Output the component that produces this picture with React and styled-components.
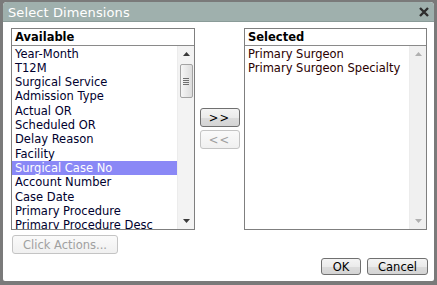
import React from "react";
import styled, { createGlobalStyle } from "styled-components";

const Global = createGlobalStyle`
  html, body { margin: 0; padding: 0; background: #7a7a7a; }
  body { width: 437px; height: 285px; overflow: hidden; font-family: "DejaVu Sans", Verdana, sans-serif; }
`;

const Dialog = styled.div`
  margin: 2px 0 0 3px;
  width: 431px;
  height: 279px;
  background: #fff;
  border-radius: 4px 4px 2px 2px;
  overflow: hidden;
  display: flex;
  flex-direction: column;
`;

const TitleBar = styled.div`
  height: 20px;
  flex: none;
  background: #9fb0ad;
  border-bottom: 1px solid #8a9b98;
  display: flex;
  align-items: center;
  justify-content: space-between;
  padding: 0 5px 0 5px;
  box-sizing: border-box;
`;

const Title = styled.span`
  color: #fff;
  font-size: 13px;
  letter-spacing: 0.1px;
  padding-top: 1px;
`;

const Body = styled.div`
  flex: 1;
  display: flex;
  flex-direction: column;
  padding: 6px 7px 6px 8px;
`;

const Row = styled.div`
  display: flex;
  align-items: flex-start;
`;

const ListBox = styled.div`
  width: ${(p) => p.$w}px;
  height: 202px;
  box-sizing: border-box;
  border: 1px solid #7f7f7f;
  display: flex;
  flex-direction: column;
  background: #fff;
`;

const Header = styled.div`
  height: 16px;
  flex: none;
  border-bottom: 1px solid #8a8a8a;
  font-weight: bold;
  font-size: 11.5px;
  line-height: 17px;
  padding-left: 3px;
  color: #000;
`;

const ListArea = styled.div`
  flex: 1;
  display: flex;
  overflow: hidden;
`;

const Items = styled.div`
  flex: 1;
  overflow: hidden;
  padding-top: 0.5px;
`;

const Item = styled.div`
  height: 14.33px;
  line-height: 15.5px;
  font-size: 11.5px;
  padding-left: 3px;
  white-space: nowrap;
  color: ${(p) => (p.$sel ? "#fff" : p.$tone)};
  background: ${(p) => (p.$sel ? "#8a88f6" : "transparent")};
`;

const ScrollTrack = styled.div`
  width: 16px;
  flex: none;
  background: ${(p) => (p.$empty ? "#f0f0f0" : "#f3f3f3")};
  border-left: 1px solid #ececec;
  display: flex;
  flex-direction: column;
  align-items: center;
`;

const Arrow = styled.div`
  height: 16px;
  width: 16px;
  display: flex;
  align-items: center;
  justify-content: center;
`;

const Spacer = styled.div`
  flex: 1;
`;

const Thumb = styled.div`
  width: 13px;
  height: 34px;
  margin-top: 2px;
  box-sizing: border-box;
  border: 1px solid #a3a3a3;
  border-radius: 2px;
  background: linear-gradient(to right, #f6f6f6, #dcdcdc);
  display: flex;
  flex-direction: column;
  align-items: center;
  justify-content: center;
  gap: 1px;
`;

const Grip = styled.div`
  width: 6px;
  height: 1px;
  background: #6f6f6f;
`;

const Middle = styled.div`
  flex: 1;
  display: flex;
  flex-direction: column;
  align-items: center;
  padding-top: 80px;
  gap: 3px;
`;

const Btn = styled.button`
  font-family: "DejaVu Sans", Verdana, sans-serif;
  font-size: 11.5px;
  width: ${(p) => p.$w}px;
  height: ${(p) => p.$h}px;
  padding: 0;
  box-sizing: border-box;
  border-radius: 3px;
  border: 1px solid ${(p) => (p.disabled ? "#c4c4c4" : "#707070")};
  background: ${(p) =>
    p.disabled
      ? "linear-gradient(#fafafa, #f0f0f0)"
      : "linear-gradient(#f4f4f4 0%, #ebebeb 50%, #dcdcdc 51%, #d4d4d4 100%)"};
  color: ${(p) => (p.disabled ? "#a0a0a0" : "#000")};
  display: flex;
  align-items: center;
  justify-content: center;
  letter-spacing: ${(p) => p.$ls || 0}px;
`;

const Footer = styled.div`
  display: flex;
  justify-content: flex-end;
  gap: 6px;
  margin-top: 4px;
  margin-right: -1px;
`;

const ActionRow = styled.div`
  margin-top: 5px;
  padding-left: 1px;
`;

const available = [
  "Year-Month",
  "T12M",
  "Surgical Service",
  "Admission Type",
  "Actual OR",
  "Scheduled OR",
  "Delay Reason",
  "Facility",
  "Surgical Case No",
  "Account Number",
  "Case Date",
  "Primary Procedure",
  "Primary Procedure Desc",
];

const selected = ["Primary Surgeon", "Primary Surgeon Specialty"];

const Up = ({ c }) => (
  <svg width="7" height="4" viewBox="0 0 7 4">
    <path d="M0 4 L3.5 0 L7 4 Z" fill={c} />
  </svg>
);
const Down = ({ c }) => (
  <svg width="7" height="4" viewBox="0 0 7 4">
    <path d="M0 0 L3.5 4 L7 0 Z" fill={c} />
  </svg>
);

export default function App() {
  return (
    <>
      <Global />
      <Dialog>
        <TitleBar>
          <Title>Select Dimensions</Title>
          <svg width="10" height="10" viewBox="0 0 10 10">
            <path d="M1 1 L9 9 M9 1 L1 9" stroke="#2e2e2e" strokeWidth="2.4" />
          </svg>
        </TitleBar>
        <Body>
          <Row>
            <ListBox $w={184}>
              <Header>Available</Header>
              <ListArea>
                <Items>
                  {available.map((t) => (
                    <Item key={t} $tone="#00002e" $sel={t === "Surgical Case No"}>
                      {t}
                    </Item>
                  ))}
                </Items>
                <ScrollTrack>
                  <Arrow>
                    <Up c="#3a3a3a" />
                  </Arrow>
                  <Thumb>
                    <Grip />
                    <Grip />
                    <Grip />
                    <Grip />
                  </Thumb>
                  <Spacer />
                  <Arrow>
                    <Down c="#3a3a3a" />
                  </Arrow>
                </ScrollTrack>
              </ListArea>
            </ListBox>
            <Middle>
              <Btn $w={40} $h={19} $ls={1}>&gt;&gt;</Btn>
              <Btn $w={40} $h={19} $ls={1} disabled>
                &lt;&lt;
              </Btn>
            </Middle>
            <ListBox $w={183}>
              <Header>Selected</Header>
              <ListArea>
                <Items>
                  {selected.map((t) => (
                    <Item key={t} $tone="#2a0000">
                      {t}
                    </Item>
                  ))}
                </Items>
                <ScrollTrack $empty>
                  <Arrow>
                    <Up c="#b0b0b0" />
                  </Arrow>
                  <Spacer />
                  <Arrow>
                    <Down c="#b0b0b0" />
                  </Arrow>
                </ScrollTrack>
              </ListArea>
            </ListBox>
          </Row>
          <ActionRow>
            <Btn $w={106} $h={19} disabled>
              Click Actions...
            </Btn>
          </ActionRow>
          <Footer>
            <Btn $w={40} $h={17}>OK</Btn>
            <Btn $w={61} $h={17}>Cancel</Btn>
          </Footer>
        </Body>
      </Dialog>
    </>
  );
}
